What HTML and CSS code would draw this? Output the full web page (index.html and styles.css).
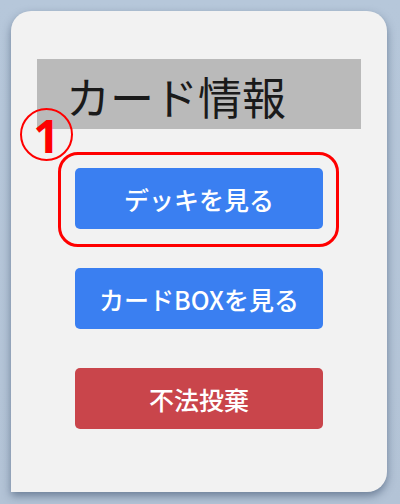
FILE: index.html
```html
<!DOCTYPE html>
<html lang="ja">
<head>
    <meta charset="UTF-8">
    <title>カード情報</title>
    <link rel="stylesheet" href="styles.css">
</head>
<body>

<div class="card">

    <!--title-->
    <h2 class="card_title">カード情報</h2>

    <!--step marker-->
    <span class="step_mark">1</span>

    <div class="button_list">
        <div class="highlight">
            <button class="btn btn_blue">デッキを見る</button>
        </div>
        <button class="btn btn_blue">カードBOXを見る</button>
        <button class="btn btn_red">不法投棄</button>
    </div>

</div>

</body>
</html>
```

FILE: styles.css
```css
body, html {
    margin: 0;
    padding: 0;
    width: 100%;
    height: 100%;
    font-family: "Noto Sans CJK JP", "Noto Sans", sans-serif;
}

body {
    background: linear-gradient(180deg, #b6c7da 0%, #b3c3d6 100%);
    overflow: hidden;
}

.card {
    position: relative;
    box-sizing: border-box;
    width: 376px;
    height: 481px;
    margin: 11px 0 0 11px;
    padding: 48px 26px 0 26px;

    background: #f2f2f2;
    border-radius: 20px 20px 20px 0;
    box-shadow: 0 4px 8px rgba(40, 60, 90, 0.5);
}

.card_title {
    margin: 0;
    height: 70px;
    padding-left: 29px;

    background: #bababa;
    color: #1a1a1a;
    font-size: 44px;
    font-weight: 400;
    line-height: 74px;
}

.step_mark {
    position: absolute;
    left: 9px;
    top: 97px;
    width: 49px;
    height: 49px;

    display: flex;
    justify-content: center;
    align-items: center;

    border: 2px solid #ff0000;
    border-radius: 50%;
    color: #ff0000;
    font-family: "Noto Sans", sans-serif;
    font-size: 46px;
    font-weight: 700;
    line-height: 1;
}

.button_list {
    display: flex;
    flex-direction: column;
    align-items: center;
    gap: 39px;
    margin-top: 39px;
}

.highlight {
    position: relative;
}

.highlight::before {
    content: "";
    position: absolute;
    left: -17px;
    right: -16px;
    top: -16px;
    bottom: -18px;
    border: 3px solid #ff0000;
    border-radius: 20px;
}

.btn {
    display: block;
    width: 248px;
    height: 61px;
    border: none;
    border-radius: 5px;

    color: #ffffff;
    font-family: "Noto Sans CJK JP", "Noto Sans", sans-serif;
    font-size: 25px;
    font-weight: 500;
}

.btn_blue {
    background: #3a7ff1;
}

.btn_red {
    background: #c9454b;
}
```
